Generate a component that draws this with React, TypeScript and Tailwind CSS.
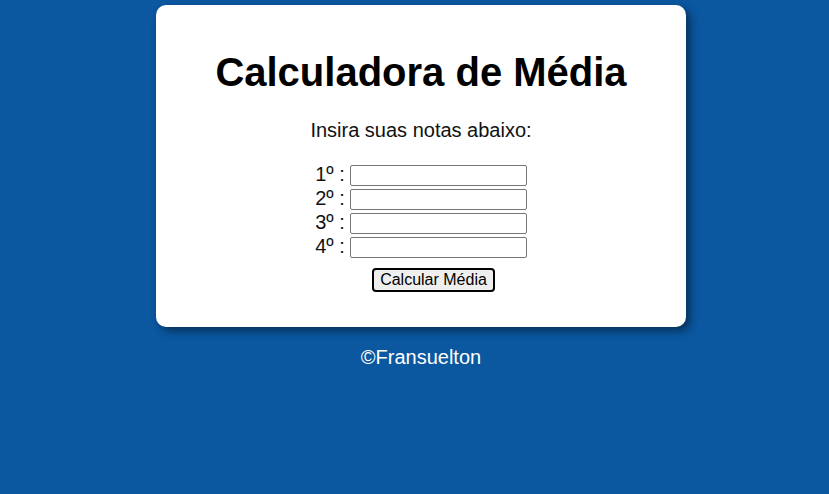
export default function App() {
  const notas = ['1º', '2º', '3º', '4º']

  return (
    <div className="min-h-[494px] w-full bg-[#0b57a0] font-['Liberation_Sans',Arial,sans-serif]">
      <div className="ml-[156px] w-[530px] pt-[5px]">
        {/* Card */}
        <div className="flex h-[322px] flex-col items-center rounded-[10px] bg-white shadow-[4px_4px_8px_rgba(0,0,0,0.45)]">
          <h1 className="mt-[44px] text-[40px] font-bold leading-[46px] text-black">Calculadora de Média</h1>
          <p className="mt-[24px] text-[20px] leading-[23px] text-[#111]">Insira suas notas abaixo:</p>

          <div className="mt-[23px] flex flex-col gap-[3px]">
            {notas.map(n => (
              <div key={n} className="flex items-center text-[20px] leading-[21px] text-[#111]">
                <span className="mr-[5px] -translate-y-px">{n} :</span>
                <input className="h-[21px] w-[177px] rounded-[2px] border border-[#767676] bg-white" />
              </div>
            ))}
          </div>

          <button className="ml-[25px] mt-[10px] h-[24px] w-[123px] rounded-[4px] border-2 border-black bg-[#efefef] text-[16px] leading-[18px] text-black">
            Calcular Média
          </button>
        </div>

        <p className="mt-[19px] text-center text-[20px] leading-[23px] text-white">©Fransuelton</p>
      </div>
    </div>
  )
}
